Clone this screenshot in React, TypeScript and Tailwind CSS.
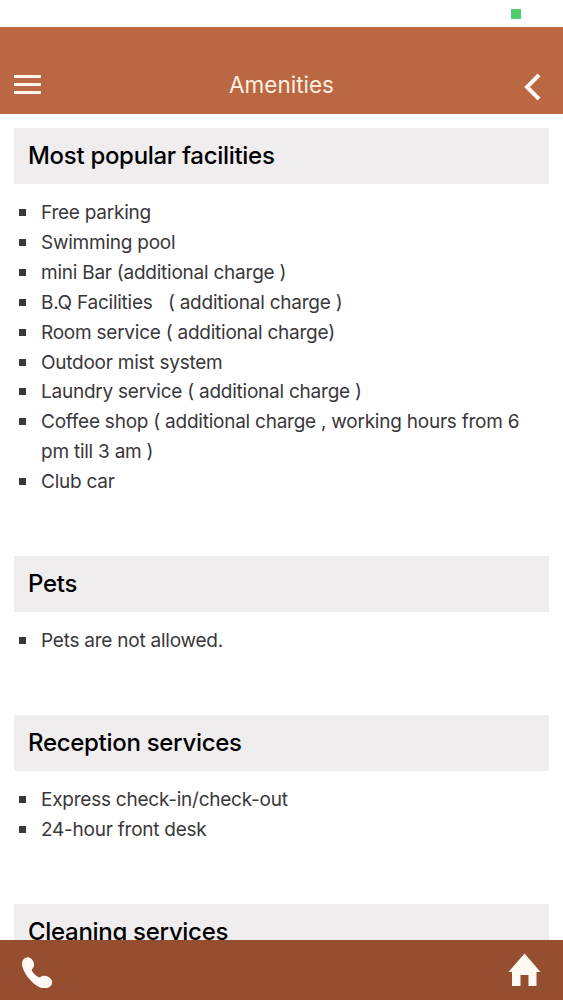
interface AmenityGroup {
  title: string;
  items: string[];
}

const groups: AmenityGroup[] = [
  {
    title: "Most popular facilities",
    items: [
      "Free parking",
      "Swimming pool",
      "mini Bar (additional charge )",
      "B.Q Facilities \u00a0 ( additional charge )",
      "Room service ( additional charge)",
      "Outdoor mist system",
      "Laundry service ( additional charge )",
      "Coffee shop ( additional charge , working hours from 6 pm till 3 am )",
      "Club car",
    ],
  },
  { title: "Pets", items: ["Pets are not allowed."] },
  {
    title: "Reception services",
    items: ["Express check-in/check-out", "24-hour front desk"],
  },
  { title: "Cleaning services", items: [] },
];

const Header = () => (
  <header className="flex h-[87px] shrink-0 items-end justify-between bg-[#bb6744] pl-3.5 pr-[22px] pb-[13px]">
    <button aria-label="Menu" className="mb-[7px] flex w-[27px] flex-col gap-[5px]">
      <span className="h-[3px] bg-[#fff6ee]" />
      <span className="h-[3px] bg-[#fff6ee]" />
      <span className="h-[3px] bg-[#fff6ee]" />
    </button>
    <h1 className="mr-[2px] text-[22.5px] leading-[32px] text-[#fff0e0]">Amenities</h1>
    <button aria-label="Back">
      <svg width="17" height="28" viewBox="0 0 17 28" fill="none" stroke="#fffaf5" strokeWidth="4">
        <path d="M15 2 3 14l12 12" />
      </svg>
    </button>
  </header>
);

const Section = ({ title, items }: AmenityGroup) => (
  <section className="mb-[59px]">
    <h2 className="flex h-[55.6px] items-center bg-[#efedee] pl-3.5 pt-px text-[24px] font-medium tracking-[-0.3px] text-black">
      {title}
    </h2>
    <ul className="pt-[14.6px]">
      {items.map((item) => (
        <li key={item} className="flex pl-[5px] pr-2 text-[19px] leading-[29.87px] tracking-[-0.24px] text-[#39373a]">
          <span className="mr-[15px] mt-[11px] size-[7px] shrink-0 bg-[#39373a]" />
          <span>{item}</span>
        </li>
      ))}
    </ul>
  </section>
);

const Footer = () => (
  <footer className="flex h-[60px] shrink-0 items-center justify-between bg-[#954e30] pl-[22px] pr-[22.5px]">
    <button aria-label="Call" className="mt-[4px]">
      <svg width="30" height="31" viewBox="0 0 30 31" fill="#fffaf4">
        <path d="M4.700.4C7.500-.1 10 1.800 11.300 4.500c1 2 1 4.300 0 6.100-.7 1.200-1.800 1.900-1.500 3 .8 2 4.400 5.500 6.600 6.600 1.400.5 2.500-.7 3.900-1.200 3.600-1.200 8.200 1.300 9.500 4.500.9 2.300 0 4.700-2 6.200-2.900 2.200-7.300 1.700-10.700.2C10.500 26.700 3.300 18.500.8 11 -.1 8.300-.3 5.500.8 3.300 1.600 1.700 2.900.7 4.700.4Z" />
      </svg>
    </button>
    <button aria-label="Home">
      <svg width="33" height="34" viewBox="0 0 33 34" fill="#fffaf4">
        <path d="M16.500.5 32.500 19H28.500v14h-8V22h-8v11h-8.500V19H.5Z" />
      </svg>
    </button>
  </footer>
);

const App = () => (
  <div className="flex h-[1000px] w-[563px] flex-col overflow-hidden bg-white font-['Inter',sans-serif]">
    <div className="flex h-[27px] shrink-0 justify-end pr-[42px] pt-[9px]">
      <span className="size-[10px] bg-[#50ce69]" />
    </div>
    <Header />
    <main className="min-h-0 flex-1 overflow-hidden px-3.5 pt-3.5">
      {groups.map((group) => (
        <Section key={group.title} {...group} />
      ))}
    </main>
    <Footer />
  </div>
);

export default App;
